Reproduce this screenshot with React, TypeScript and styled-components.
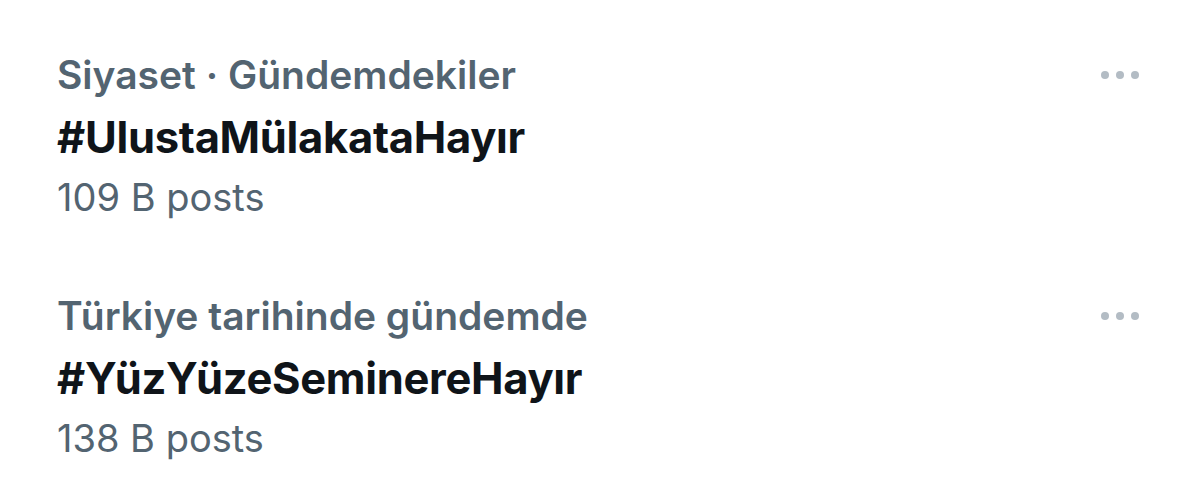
import React from 'react'
import styled, { createGlobalStyle } from 'styled-components'

const GlobalStyle = createGlobalStyle`
  html, body {
    margin: 0;
    padding: 0;
    background: #ffffff;
  }
  body {
    font-family: Inter, "Noto Sans", "Liberation Sans", sans-serif;
    -webkit-font-smoothing: antialiased;
  }
`

const TrendList = styled.div`
  display: flex;
  flex-direction: column;
  gap: 59px;
  width: 1200px;
  height: 490px;
  padding: 44px 59px 0 57px;
  box-sizing: border-box;
  overflow: hidden;
`

const TrendItem = styled.div`
  display: flex;
  flex-direction: column;
`

const TopRow = styled.div`
  display: flex;
  align-items: center;
  justify-content: space-between;
`

const Category = styled.div`
  font-size: 39px;
  font-weight: 600;
  line-height: 62px;
  color: #536471;
`

const Hashtag = styled.div`
  font-size: 43.5px;
  font-weight: 700;
  line-height: 62px;
  color: #0f1419;
  letter-spacing: -0.3px;
`

const Count = styled.div`
  font-size: 38px;
  font-weight: 400;
  line-height: 58px;
  color: #536471;
`

const MoreButton = styled.div`
  display: flex;
  gap: 7px;
  align-items: center;
  padding: 0 2px;
`

const Dot = styled.span`
  width: 8px;
  height: 8px;
  border-radius: 50%;
  background: #b3bcc4;
`

type Trend = { category: string; tag: string; posts: string }

const trends: Trend[] = [
  { category: 'Siyaset · Gündemdekiler', tag: '#UlustaMülakataHayır', posts: '109 B posts' },
  { category: 'Türkiye tarihinde gündemde', tag: '#YüzYüzeSeminereHayır', posts: '138 B posts' },
]

export default function App() {
  return (
    <>
      <GlobalStyle />
      <TrendList>
        {trends.map((item) => (
          <TrendItem key={item.tag}>
            <TopRow>
              <Category>{item.category}</Category>
              <MoreButton>
                <Dot />
                <Dot />
                <Dot />
              </MoreButton>
            </TopRow>
            <Hashtag>{item.tag}</Hashtag>
            <Count>{item.posts}</Count>
          </TrendItem>
        ))}
      </TrendList>
    </>
  )
}
